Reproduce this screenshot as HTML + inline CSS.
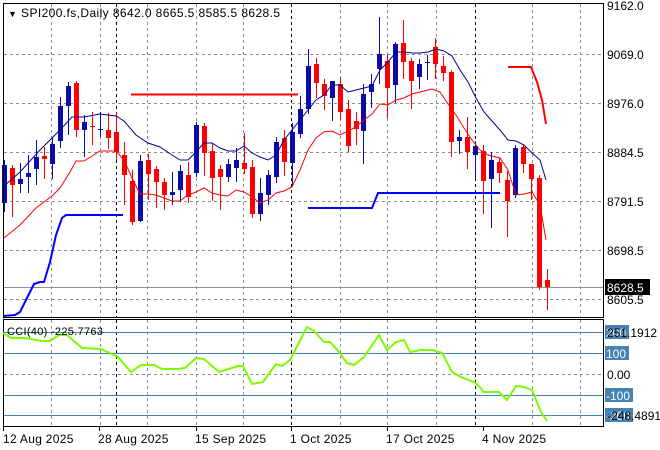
<!DOCTYPE html>
<html><head><meta charset="utf-8"><style>
html,body{margin:0;padding:0;background:#fff;}
svg{display:block;font-family:"Liberation Sans",sans-serif;}
</style></head><body>
<svg id="s" width="660" height="450" viewBox="0 0 660 450" xmlns="http://www.w3.org/2000/svg">
<rect width="660" height="450" fill="#fff"/>
<g id="grid" stroke="#8a8f98" stroke-width="1" stroke-dasharray="3,3" fill="none">
<path d="M4 54.5H603M4 103.5H603M4 152.5H603M4 201.5H603M4 250.5H603M4 299.5H603"/>
<path d="M51.5 4V318M100.5 4V318M147.5 4V318M196.5 4V318M243.5 4V318M340.5 4V318M387.5 4V318M436.5 4V318M532.5 4V318M580.5 4V318"/>
<path d="M51.5 320V426M100.5 320V426M147.5 320V426M196.5 320V426M243.5 320V426M340.5 320V426M387.5 320V426M436.5 320V426M532.5 320V426M580.5 320V426"/>
<path d="M4 374.5H603"/>
</g>
<g stroke="#000" stroke-dasharray="3,3" fill="none">
<path d="M116.5 4V318M291.5 4V318M475.5 4V318M116.5 320V426M291.5 320V426M475.5 320V426"/>
</g>
<path d="M4 287.5H603" stroke="#8a8f98"/>
<g id="c"></g>
<polyline fill="none" stroke="#000090" stroke-width="1" points="4,186 20,172 40,150 60,130 72,117 84,117 100,114 116,116 124,121 136,135 148,143 160,147 172,155 180,160 188,160 196,152 204,143 212,143 220,148 228,151 236,151 244,146 252,153 260,157 268,160 276,155 284,140 292,130 300,120 308,110 316,100 324,95 332,85 340,85 348,92 356,90 364,88 372,86 380,70 388,62 396,52 404,52 412,53 420,53 428,52 436,49 444,51 452,56 460,70 468,82 476,98 484,112 492,121 500,130 508,140 516,141 524,145 532,153 540,160 546,180"/>
<polyline fill="none" stroke="#ff0000" stroke-width="1" points="4,238 20,225 36,208 52,196 60,188 70,172 76,161 84,161 92,156 100,151 116,151 124,160 132,178 140,194 148,194 156,195 164,198 172,201 180,201 188,195 196,192 204,188 212,193 220,195 228,196 236,190 244,192 252,197 260,203 268,200 276,193 284,191 292,187 300,170 308,150 316,138 324,132 332,131 340,135 348,131 356,127 364,120 372,114 380,104 388,105 396,100 404,98 412,94 420,92 432,89 440,92 448,104 456,115 464,128 472,140 480,150 488,155 500,158 508,170 516,195 524,194 532,192 540,205 546,240"/>
<path d="M131 94.5H298" stroke="#ff0000" stroke-width="2"/>
<polyline fill="none" stroke="#0000ff" stroke-width="2" points="308,208 372,208 378,193 500,193"/>
<polyline fill="none" stroke="#0000ff" stroke-width="2" points="3,316 15,315 20,312 27,298 34,284 40,282 44,282 50,262 56,235 62,218 66,215 123,215"/>
<polyline fill="none" stroke="#ff0000" stroke-width="2" points="508,67 531,67 537,82 542,100 546,124"/>
<rect x="3.5" y="3.5" width="600" height="314" fill="none" stroke="#000"/>
<rect x="3.5" y="319.5" width="600" height="107" fill="none" stroke="#000"/>
<g stroke="#4682b4" stroke-width="1"><path d="M4 332.5H603M4 353.5H603M4 395.5H603M4 415.5H603"/></g>
<polyline fill="none" stroke="#7cfc00" stroke-width="2" points="3,333 11,338 25,338 42,341 50,341 59,335 67,335 82,348 101,349 118,357 131,372 141,365 154,365 162,369 177,369 185,368 196,358 204,359 219,372 238,366 243,366 252,384 263,382 276,364 282,366 290,360 307,327 314,331 324,342 330,342 339,352 347,363 354,365 364,357 379,335 387,350 396,342 404,340 410,352 421,350 433,350 442,353 452,372 461,377 476,383 484,392 499,392 507,400 516,386 524,387 532,390 541,412 547,421"/>
<g font-size="12" fill="#000">
<text x="8" y="17" letter-spacing="0.4"><tspan font-size="9">▼</tspan> SPI200.fs,Daily  8642.0 8665.5 8585.5 8628.5</text>
<text x="7" y="335" font-size="11" letter-spacing="0.3">CCI(40) -225.7763</text>
<text x="607" y="10">9162.0</text>
<text x="607" y="59">9069.0</text>
<text x="607" y="108">8976.0</text>
<text x="607" y="157">8884.5</text>
<text x="607" y="206">8791.5</text>
<text x="607" y="255">8698.5</text>
<text x="607" y="304">8605.5</text>
<rect x="605" y="279" width="45" height="16" fill="#000"/>
<text x="607" y="292" fill="#fff">8628.5</text>
<rect x="605" y="325" width="24" height="14" fill="#4682b4"/>
<rect x="605" y="346" width="24" height="14" fill="#4682b4"/>
<rect x="605" y="388" width="28" height="14" fill="#4682b4"/>
<rect x="605" y="408" width="28" height="14" fill="#4682b4"/>
<text x="606" y="337" fill="#fff">200</text>
<text x="607" y="337">251.1912</text>
<text x="606" y="358" fill="#fff">100</text>
<text x="607" y="379">0.00</text>
<text x="606" y="400" fill="#fff">-100</text>
<text x="606" y="420" fill="#fff">-200</text>
<text x="607" y="420">-248.4891</text>
<text x="3" y="443" letter-spacing="0.3">12 Aug 2025</text>
<text x="98" y="443" letter-spacing="0.3">28 Aug 2025</text>
<text x="195" y="443" letter-spacing="0.3">15 Sep 2025</text>
<text x="290" y="443" letter-spacing="0.3">1 Oct 2025</text>
<text x="386" y="443" letter-spacing="0.3">17 Oct 2025</text>
<text x="482" y="443" letter-spacing="0.3">4 Nov 2025</text>
</g>
<path d="M3.5 427V431M99.5 427V431M196.5 427V431M291.5 427V431M387.5 427V431M483.5 427V431" stroke="#000"/>
</svg>
<script>
var d=[[4,'b',165,203,160,212],[12,'r',168,185,165,217],[20,'b',179,184,163,193],[28,'b',173,177,155,193],[36,'b',157,169,140,185],[44,'r',156,159,147,179],[52,'b',144,164,138,179],[60,'b',106,141,97,148],[68,'b',86,106,82,135],[76,'r',83,130,81,137],[84,'b',122,130,115,157],[92,'r',126,127,112,145],[100,'b',129,130,112,137],[108,'r',130,138,113,149],[116,'r',132,152,112,160],[124,'r',155,175,142,205],[132,'r',181,222,170,225],[140,'b',161,221,155,222],[148,'r',160,174,154,200],[156,'r',169,182,166,208],[164,'r',182,195,178,210],[172,'b',192,195,172,205],[180,'b',171,190,165,202],[188,'r',175,197,162,203],[196,'b',125,173,122,177],[204,'r',126,153,123,176],[212,'r',151,178,143,201],[220,'r',169,177,165,210],[228,'b',164,177,159,182],[236,'b',160,168,148,182],[244,'r',163,169,133,174],[252,'r',167,214,160,218],[260,'b',193,214,178,221],[268,'b',175,195,170,205],[276,'b',142,177,137,183],[284,'r',138,162,130,176],[292,'b',132,163,123,185],[300,'b',109,134,96,138],[308,'b',66,109,49,114],[316,'r',64,83,58,98],[324,'r',84,96,79,110],[332,'b',81,98,81,121],[340,'r',84,112,77,120],[348,'r',109,146,100,152],[356,'r',121,129,112,145],[363,'b',94,131,84,164],[371,'b',84,92,74,108],[379,'b',54,69,17,84],[387,'r',61,88,54,118],[395,'b',44,85,42,103],[403,'r',43,62,20,79],[411,'r',61,81,58,109],[419,'b',64,77,59,89],[427,'b',62,63,55,80],[435,'r',47,64,38,79],[443,'r',66,73,56,81],[451,'r',72,142,70,157],[459,'b',137,141,130,154],[467,'r',137,152,117,169],[475,'b',146,155,141,179],[483,'r',151,181,145,214],[491,'b',160,179,152,228],[499,'r',162,173,158,183],[507,'r',180,201,171,237],[515,'b',148,195,145,198],[523,'r',147,164,145,173],[531,'r',164,179,164,200],[539,'r',178,287,175,290],[547,'r',280,287,269,310]];
var h='';d.forEach(function(c){var col=c[1]=='b'?'#0a0aa8':'#ff0000';
h+='<path d="M'+(c[0]+0.5)+' '+c[4]+'V'+c[5]+'" stroke="'+col+'"/>';
h+='<rect x="'+(c[0]-2)+'" y="'+c[2]+'" width="5" height="'+Math.max(1,c[3]-c[2])+'" fill="'+col+'"/>';});
document.getElementById('c').innerHTML=h;
</script>
</body></html>
